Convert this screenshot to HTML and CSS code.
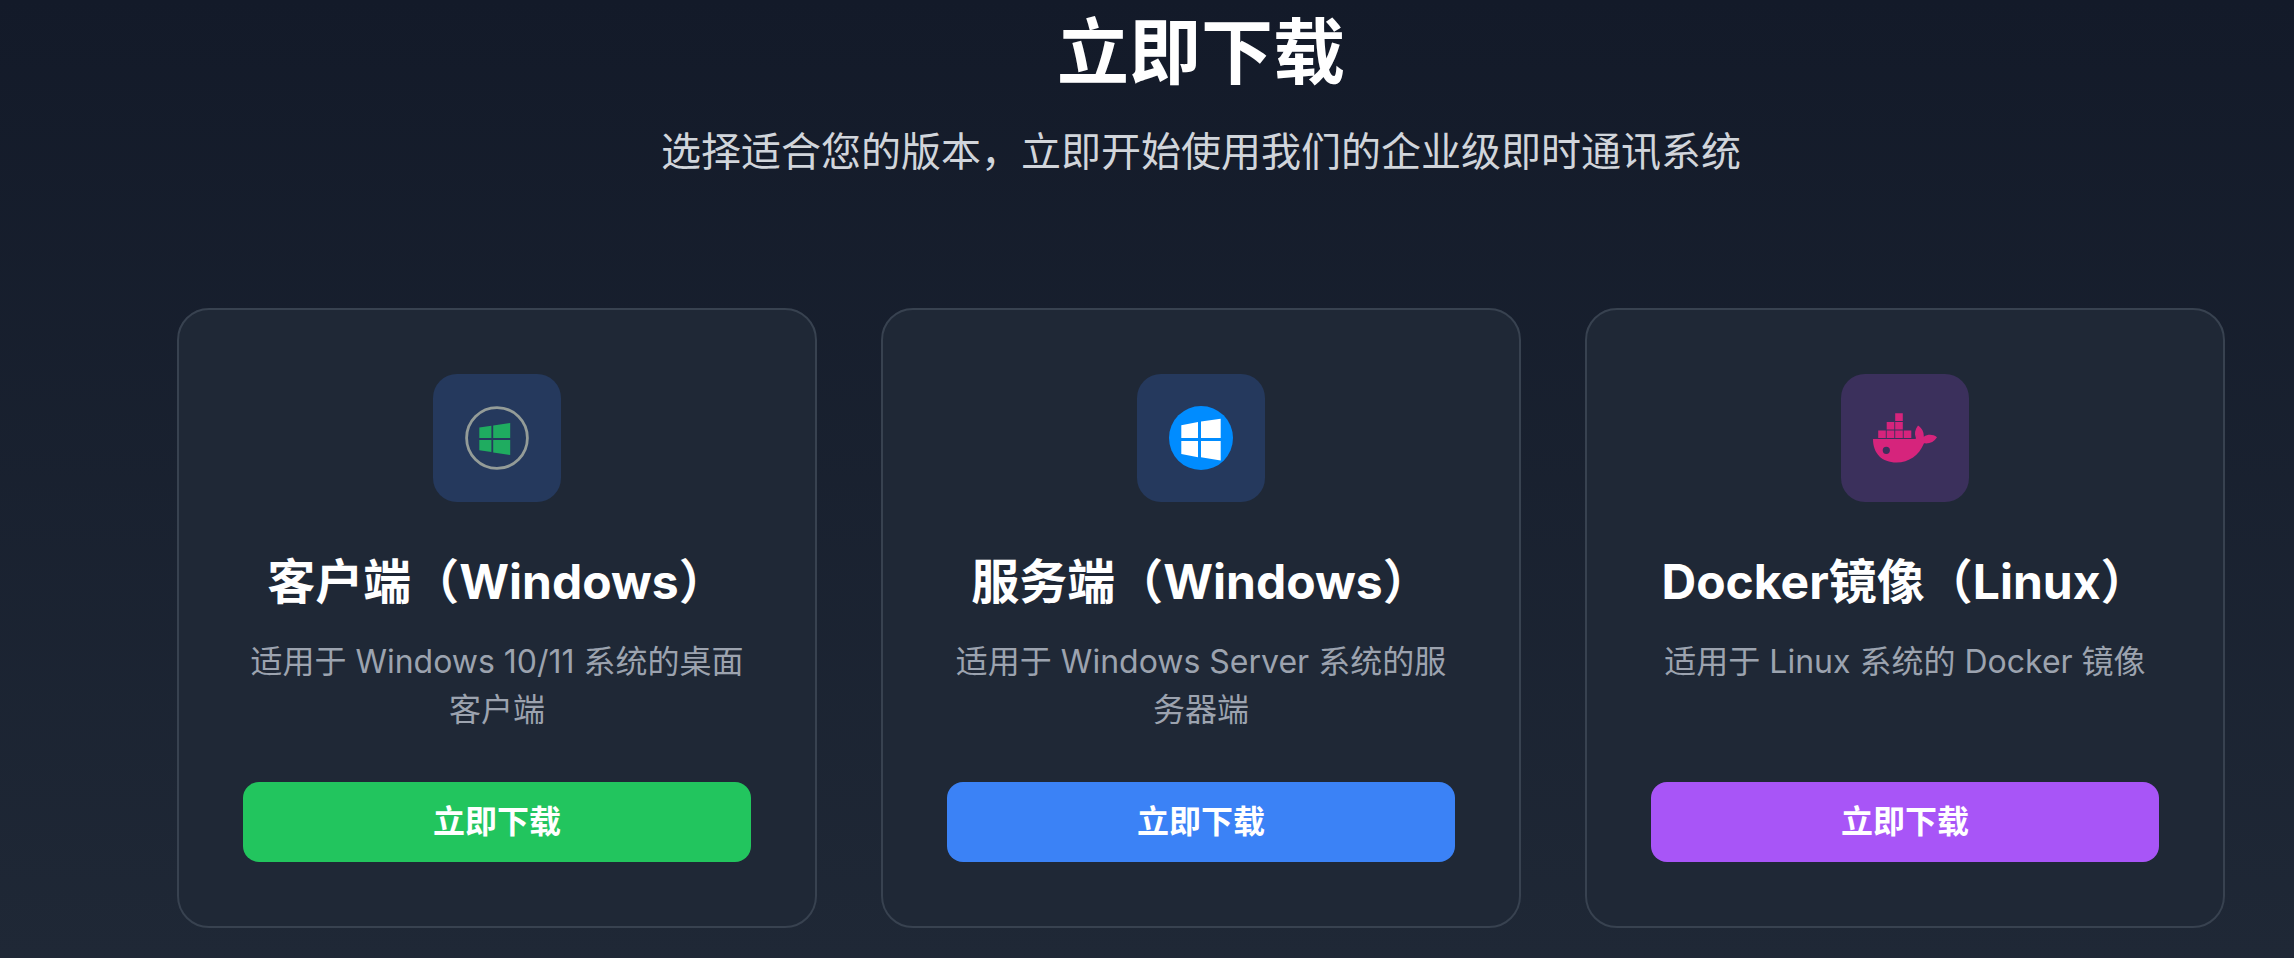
FILE: index.html
```html
<!DOCTYPE html>
<html lang="zh-CN">
<head>
    <meta charset="UTF-8">
    <meta name="viewport" content="width=device-width, initial-scale=1.0">
    <title>立即下载</title>
    <link rel="stylesheet" href="styles.css">
</head>
<body>

<section class="download" id="download">
    <div class="container">
        <div class="section-header">
            <h2>立即下载</h2>
            <p>选择适合您的版本，立即开始使用我们的企业级即时通讯系统</p>
        </div>

        <div class="cards">
            <!-- Windows client -->
            <div class="card">
                <div class="icon icon-blue">
                    <svg viewBox="0 0 64 64" aria-hidden="true">
                        <circle cx="32" cy="32" r="30.4" fill="none" stroke="#949c98" stroke-width="2.8"/>
                        <path fill="#1fac60" d="M14.3 21.5L26.4 19.7V32H14.3zM28.2 19.4L45.2 17V32H28.2zM14.3 34H26.4V46L14.3 44.2zM28.2 34H45.2V49L28.2 46.6z"/>
                    </svg>
                </div>
                <h3>客户端（Windows）</h3>
                <p>适用于 Windows 10/11 系统的桌面客户端</p>
                <a href="#" class="btn btn-green">立即下载</a>
            </div>

            <!-- Windows server -->
            <div class="card">
                <div class="icon icon-blue">
                    <svg viewBox="0 0 64 64" aria-hidden="true">
                        <circle cx="32" cy="32" r="32" fill="#008cff"/>
                        <path fill="#fff" d="M12.3 19.2L29 16V32H12.3zM32 15.5L51.7 12.7V32H32zM12.3 35H29V51.2L12.3 48zM32 35H51.7V54.4L32 51.2z"/>
                    </svg>
                </div>
                <h3>服务端（Windows）</h3>
                <p>适用于 Windows Server 系统的服务器端</p>
                <a href="#" class="btn btn-blue">立即下载</a>
            </div>

            <!-- Docker image -->
            <div class="card">
                <div class="icon icon-purple">
                    <svg viewBox="0 0 64 64" aria-hidden="true">
                        <g fill="#d6247c">
                            <path d="M22.2 7.3h7.6v7.6h-7.6zM13.7 15.9h7.6v7.6h-7.6zM22.2 15.9h7.6v7.6h-7.6zM5.2 24.4h7.6V32H5.2zM13.7 24.4h7.6V32h-7.6zM22.2 24.4h7.6V32h-7.6zM30.7 24.4h7.6V32h-7.6z"/>
                            <path fill-rule="evenodd" d="M0 33H41.500C43 33 43.300 32.500 42.600 31C41.300 27.500 42 23.500 45 19.500C49 22 51 26 50.800 30.800C55 28 60 28.300 64 31.200C61 36 56.500 38 51 37.300C46 49.500 36 56.500 23.500 56.500C9 56.500 0 47.500 0 33zM13.300 40.700a3.600 3.600 0 1 0 0 7.200a3.600 3.600 0 1 0 0-7.200z"/>
                        </g>
                    </svg>
                </div>
                <h3>Docker镜像（Linux）</h3>
                <p>适用于 Linux 系统的 Docker 镜像</p>
                <a href="#" class="btn btn-purple">立即下载</a>
            </div>
        </div>
    </div>
</section>

</body>
</html>
```
FILE: styles.css
```css
* {
    box-sizing: border-box;
    margin: 0;
    padding: 0;
}

body {
    font-family: Inter, "Noto Sans CJK SC", sans-serif;
    background-color: #1f2937;
    color: #fff;
}

.download {
    min-height: 100vh;
    padding: 12px 0 30px 108px;
    background: linear-gradient(to bottom, #131a29, #1f2836);
}

.container {
    max-width: 2048px;
    margin: 0 auto;
}

.section-header {
    text-align: center;
    margin-bottom: 128px;
}

.section-header h2 {
    font-size: 72px;
    line-height: 80px;
    font-weight: 700;
    margin-bottom: 32px;
}

.section-header p {
    font-size: 40px;
    line-height: 56px;
    color: #d1d5db;
}

.cards {
    display: grid;
    grid-template-columns: repeat(3, 1fr);
    gap: 64px;
}

.card {
    display: flex;
    flex-direction: column;
    padding: 64px;
    text-align: center;
    background-color: #1f2836;
    border: 2px solid #384250;
    border-radius: 32px;
}

.card h3 {
    font-size: 48px;
    line-height: 64px;
    font-weight: 700;
    margin-bottom: 24px;
}

.card p {
    flex: 1;
    font-size: 32px;
    line-height: 48px;
    color: #9ca3af;
    margin-bottom: 48px;
}

.icon {
    display: flex;
    align-items: center;
    justify-content: center;
    width: 128px;
    height: 128px;
    margin: 0 auto 48px;
    border-radius: 24px;
}

.icon svg {
    width: 64px;
    height: 64px;
}

.icon-blue {
    background-color: #25395d;
}

.icon-purple {
    background-color: #3b305c;
}

.btn {
    display: block;
    padding: 16px 32px;
    font-size: 32px;
    line-height: 48px;
    font-weight: 600;
    color: #fff;
    text-decoration: none;
    border-radius: 16px;
}

.btn-green {
    background-color: #22c55e;
}

.btn-blue {
    background-color: #3b82f6;
}

.btn-purple {
    background-color: #a855f7;
}
```
